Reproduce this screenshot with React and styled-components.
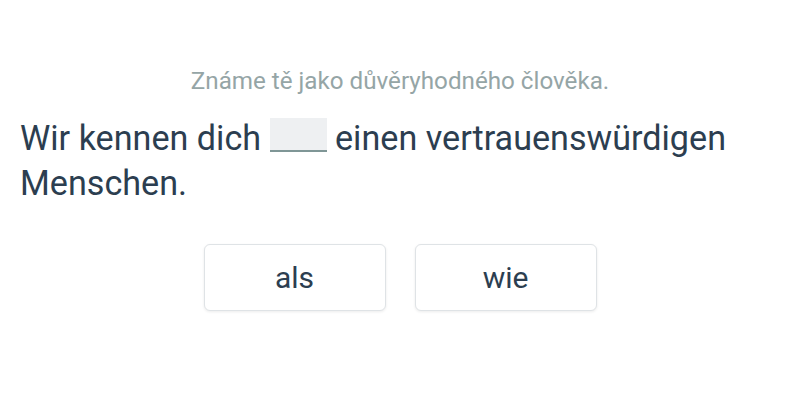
import React from "react";
import styled, { createGlobalStyle } from "styled-components";

const Global = createGlobalStyle`
  html, body { margin: 0; padding: 0; background: #fff; }
  body { font-family: Roboto, "Noto Sans", sans-serif; }
`;

const Page = styled.div`
  width: 800px;
  height: 400px;
  box-sizing: border-box;
  padding: 67px 20px 0;
  display: flex;
  flex-direction: column;
`;

const Hint = styled.div`
  text-align: center;
  font-size: 24.2px;
  line-height: 28px;
  color: #95a5a6;
`;

const Sentence = styled.div`
  margin-top: 21px;
  font-size: 34.15px;
  line-height: 45px;
  color: #2c3e50;
`;

const Blank = styled.span`
  display: inline-block;
  width: 57px;
  height: 34px;
  vertical-align: -2px;
  background: #eef0f2;
  border-bottom: 2px solid #7f9696;
  box-sizing: border-box;
`;

const Options = styled.div`
  margin-top: 38px;
  display: flex;
  justify-content: center;
  gap: 29px;
`;

const Option = styled.button`
  width: 182px;
  height: 67px;
  padding: 0;
  background: #fff;
  border: 1px solid #dfe3e6;
  border-radius: 6px;
  box-shadow: 0 1px 3px rgba(0, 0, 0, 0.08);
  font-family: Roboto, "Noto Sans", sans-serif;
  font-size: 30px;
  color: #2c3e50;
  cursor: pointer;
`;

export default function App() {
  return (
    <>
      <Global />
      <Page>
        <Hint>Známe tě jako důvěryhodného člověka.</Hint>
        <Sentence>
          Wir kennen dich <Blank /> einen vertrauenswürdigen Menschen.
        </Sentence>
        <Options>
          <Option>als</Option>
          <Option>wie</Option>
        </Options>
      </Page>
    </>
  );
}
